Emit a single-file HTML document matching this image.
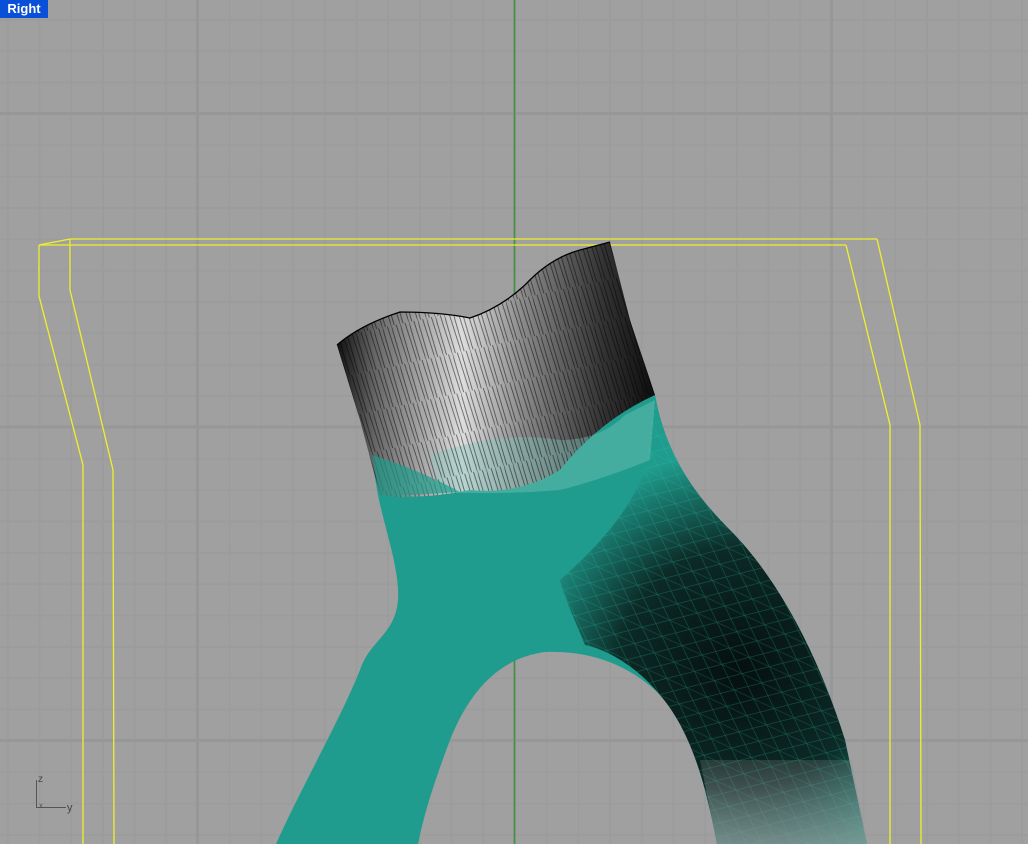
<!DOCTYPE html>
<html><head><meta charset="utf-8"><style>
html,body{margin:0;padding:0;background:#a0a0a0;}
#w{position:relative;width:1028px;height:844px;overflow:hidden;}
svg{position:absolute;left:0;top:0;}
#lbl{position:absolute;left:0;top:0;width:48px;height:18px;background:#0a4fd8;color:#fff;font:bold 13px "Liberation Sans",sans-serif;line-height:18px;text-align:center;}
</style></head><body><div id="w">
<svg width="1028" height="844" viewBox="0 0 1028 844">
<defs>
<pattern id="mn" patternUnits="userSpaceOnUse" x="197" y="113" width="31.7" height="31.35">
<rect x="0" y="0" width="2" height="31.35" fill="#9c9c9c"/><rect x="0" y="0" width="31.7" height="2" fill="#9c9c9c"/></pattern>
<pattern id="mj" patternUnits="userSpaceOnUse" x="196" y="112" width="317" height="313.5">
<rect x="0" y="0" width="3" height="313.5" fill="#979797"/><rect x="0" y="0" width="317" height="3" fill="#979797"/></pattern>
<linearGradient id="cyl" x1="337" y1="0" x2="650" y2="0" gradientUnits="userSpaceOnUse">
<stop offset="0" stop-color="#111"/><stop offset="0.12" stop-color="#666"/><stop offset="0.4" stop-color="#ddd"/><stop offset="0.6" stop-color="#888"/><stop offset="0.85" stop-color="#333"/><stop offset="1" stop-color="#111"/></linearGradient>
<radialGradient id="dk" cx="740" cy="670" r="220" gradientUnits="userSpaceOnUse">
<stop offset="0" stop-color="#050f0e"/><stop offset="0.55" stop-color="#0c2a26"/><stop offset="1" stop-color="#1f9c8d"/></radialGradient>
<linearGradient id="fade" x1="0" y1="720" x2="0" y2="844" gradientUnits="userSpaceOnUse">
<stop offset="0" stop-color="#888" stop-opacity="0"/><stop offset="1" stop-color="#9a9a9a" stop-opacity="0.7"/></linearGradient>
<pattern id="wire" patternUnits="userSpaceOnUse" width="22" height="18" patternTransform="rotate(25)">
<path d="M0 0L22 18M22 0L0 18M0 9H22" stroke="#2fc2ad" stroke-width="0.6" fill="none"/></pattern>
<pattern id="bw" patternUnits="userSpaceOnUse" width="9" height="40" patternTransform="rotate(-12)">
<path d="M0 0L3 40M5 0L9 40" stroke="#000" stroke-width="0.8" fill="none"/></pattern>
</defs>
<rect width="1028" height="844" fill="#a0a0a0"/>
<rect width="1028" height="844" fill="url(#mn)"/>
<rect width="1028" height="844" fill="url(#mj)"/>
<line x1="514.5" y1="0" x2="514.5" y2="844" stroke="#3c963c" stroke-width="1.5"/>
<g fill="none" stroke="#f0f02a" stroke-width="1.3">
<polyline points="39,245 39,296 83,465 83,844"/>
<polyline points="70,239 70,290 113,470 114,844"/>
<polyline points="846,245 890,425 890,844"/>
<polyline points="877,239 920,425 921,844"/>
<line x1="39" y1="245" x2="846" y2="245"/>
<line x1="70" y1="239" x2="877" y2="239"/>
<line x1="39" y1="245" x2="70" y2="239"/>
</g>
<path d="M276,844 C300,790 340,720 360,670 C370,640 395,635 398,600 C400,570 385,530 378,495 L370,450 L655,395 C665,450 690,490 730,530 C780,580 820,660 845,740 L867,844 L717,844 C705,780 690,730 660,695 C630,665 590,650 545,652 C500,658 470,690 450,740 C435,780 425,810 418,844 Z" fill="#1f9c8d"/>
<path d="M560,580 C600,545 630,510 645,470 L655,395 C665,450 690,490 730,530 C780,580 820,660 845,740 L867,844 L717,844 C705,780 690,730 660,695 C640,670 610,650 585,645 C575,620 565,600 560,580 Z" fill="url(#dk)"/>
<path d="M560,580 C600,545 630,510 645,470 L655,395 C665,450 690,490 730,530 C780,580 820,660 845,740 L867,844 L717,844 C705,780 690,730 660,695 C640,670 610,650 585,645 C575,620 565,600 560,580 Z" fill="url(#wire)" opacity="0.35"/>
<path d="M700,760 L852,760 L867,844 L717,844 Z" fill="url(#fade)"/>
<path d="M337,345 Q360,325 400,312 Q440,312 470,318 Q500,308 525,285 Q550,258 580,250 L610,242 L630,320 L655,395 Q600,420 560,470 Q520,495 470,490 Q420,500 380,495 L360,420 Z" fill="url(#cyl)"/>
<path d="M430,455 Q500,430 560,440 Q600,440 625,415 L655,400 L650,460 Q600,480 560,490 Q500,495 440,492 Z" fill="#7fc9bd" opacity="0.4"/>
<path d="M337,345 Q360,325 400,312 Q440,312 470,318 Q500,308 525,285 Q550,258 580,250 L610,242 L630,320 L655,395 Q600,420 560,470 Q520,495 470,490 Q420,500 380,495 L360,420 Z" fill="url(#bw)" opacity="0.6"/>
<path d="M337,345 Q360,325 400,312 Q440,312 470,318 Q500,308 525,285 Q550,258 580,250 L610,242" fill="none" stroke="#000" stroke-width="1.3"/>
<path d="M372,455 Q420,470 460,492 L380,497 Z" fill="#1f9c8d" opacity="0.7"/>
<g stroke="#555" stroke-width="1" fill="none"><line x1="36.5" y1="780" x2="36.5" y2="808"/><line x1="36" y1="807.5" x2="66" y2="807.5"/></g>
<text x="38" y="782" font-family="Liberation Sans,sans-serif" font-size="10" fill="#444">z</text>
<text x="67" y="811" font-family="Liberation Sans,sans-serif" font-size="11" fill="#444">y</text>
<text x="39" y="808" font-family="Liberation Sans,sans-serif" font-size="8" fill="#555">x</text>
</svg>
<div id="lbl">Right</div>
</div></body></html>
